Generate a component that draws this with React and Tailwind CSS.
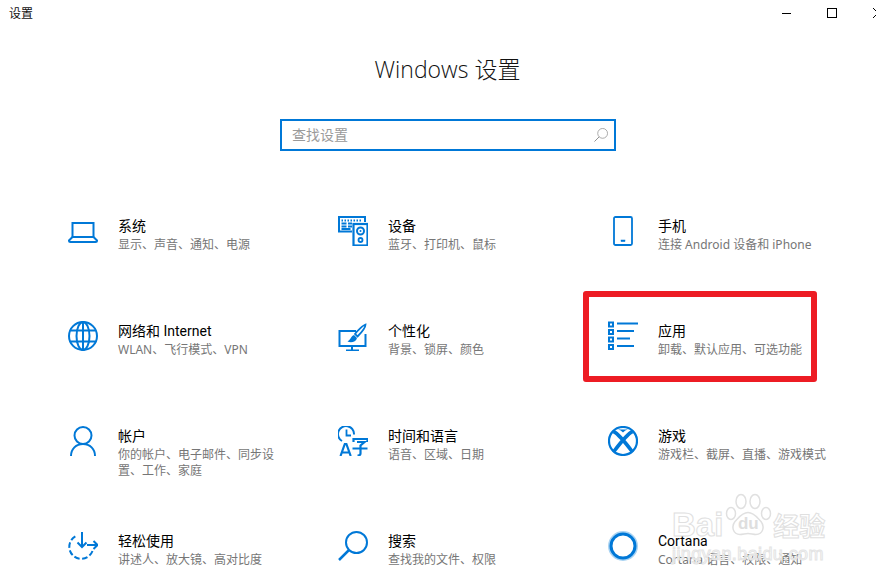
import React from 'react';

function Laptop() {
  return (
    <svg viewBox="0 0 30 30" className="h-[30px] w-[30px]" fill="none" stroke="#0078d7" strokeWidth="2">
      <rect x="4.500" y="7" width="21" height="14" />
      <path d="M4.500 21 1 24.500c0 .8.500 1.500 1.500 1.500h25c1 0 1.500-.7 1.500-1.500L25.500 21" />
    </svg>
  );
}

function Devices() {
  return (
    <svg viewBox="0 0 30 30" className="h-[30px] w-[30px]" fill="none" stroke="#0078d7" strokeWidth="2">
      <path d="M14 15.500H1V1h26v5" />
      <path d="M3.500 4.500h1.500M6.500 4.500h1.500M9.500 4.500h1.500M12.500 4.500h1.500M15.500 4.500h1.500M18.500 4.500h1.500M21.500 4.500h1.500M3.500 7.500h5M3.500 10.500h5M10 7.500h4M10 10.500h4M3.500 13h9" strokeWidth="1.800" />
      <rect x="15.500" y="8" width="14" height="21.500" strokeWidth="2.200" />
      <circle cx="22.500" cy="15" r="3.500" strokeWidth="2" />
      <circle cx="22.500" cy="15" r="1" fill="#0078d7" stroke="none" />
      <circle cx="22.500" cy="24" r="2" strokeWidth="1.800" />
    </svg>
  );
}

function Phone() {
  return (
    <svg viewBox="0 0 30 30" className="h-[30px] w-[30px]" fill="none" stroke="#0078d7" strokeWidth="1.800">
      <rect x="6" y="1" width="18" height="28" rx="1.500" />
      <rect x="13" y="24" width="4" height="1.600" fill="#0078d7" strokeWidth="0.500" />
    </svg>
  );
}

function Globe() {
  return (
    <svg viewBox="0 0 30 30" className="h-[30px] w-[30px]" fill="none" stroke="#0078d7" strokeWidth="2">
      <circle cx="15" cy="15" r="14" />
      <ellipse cx="15" cy="15" rx="6.500" ry="14" />
      <path d="M15 1v28M2.500 9.500h25M2.500 20.500h25" />
    </svg>
  );
}

function Brush() {
  return (
    <svg viewBox="0 0 30 30" className="h-[30px] w-[30px]" fill="none" stroke="#0078d7" strokeWidth="2">
      <path d="M18 10H1.500v15h26V13" />
      <path d="M14 25v4M8 29.500h13" />
      <path d="M27.500 3.500c-2 .5-8 6-10.500 9.500l2.500 2.500c3-3 8-8.500 8-12z" fill="#fff" strokeWidth="1.800" />
      <path d="M16 14c-3 .8-2.500 4-6.500 6.500 3 1.200 8.500 1 9.500-3.500z" fill="#0078d7" stroke="none" />
    </svg>
  );
}

function AppsList() {
  return (
    <svg viewBox="0 0 30 30" className="h-[30px] w-[30px]" fill="none">
      <g fill="#0078d7">
        <rect x="0" y="0.500" width="6" height="6" />
        <rect x="0" y="8" width="6" height="6" />
        <rect x="0" y="15.500" width="6" height="6" />
        <rect x="0" y="23" width="6" height="6" />
      </g>
      <g fill="#fff">
        <rect x="2" y="2.500" width="2" height="2" />
        <rect x="2" y="10" width="2" height="2" />
        <rect x="2" y="17.500" width="2" height="2" />
        <rect x="2" y="25" width="2" height="2" />
      </g>
      <path d="M9 2.500h21M9 10h17M9 17.500h13M9 25h17" stroke="#0078d7" strokeWidth="1.800" />
    </svg>
  );
}

function Person() {
  return (
    <svg viewBox="0 0 30 30" className="h-[30px] w-[30px]" fill="none" stroke="#0078d7" strokeWidth="2">
      <circle cx="15" cy="9.500" r="8.500" />
      <path d="M3 30C3 23 8 18 15 18S27 23 27 30" />
    </svg>
  );
}

function TimeLang() {
  return (
    <svg viewBox="0 0 30 30" className="h-[30px] w-[30px]" fill="none" stroke="#0078d7">
      <path d="M4 15A8 8 0 1 1 16 8.500" strokeWidth="2" />
      <path d="M8.500 3.500v6h4.500" strokeWidth="1.800" />
      <path d="M2.500 30 6.800 18h1.600l4.300 12M4 26.500h7" strokeWidth="2.200" />
      <path d="M15.500 16v-3h14v3M19 16h7.500l-4 3.500v8c0 1.500-1 2-3 2M14.500 22.500h15" strokeWidth="2.200" />
    </svg>
  );
}

function Xbox() {
  return (
    <svg viewBox="0 0 30 30" className="h-[30px] w-[30px]" fill="none" stroke="#0078d7">
      <circle cx="15" cy="15" r="14" strokeWidth="2.200" />
      <path d="M5.500 5.500C11 8 20 20 24.500 26M24.500 5.500C19 8 10 20 5.500 26" strokeWidth="3.600" />
      <path d="M10 3.500c2 .3 3.500 1.500 5 3 1.500-1.500 3-2.700 5-3z" fill="#0078d7" stroke="none" />
    </svg>
  );
}

function Ease() {
  return (
    <svg viewBox="0 0 30 30" className="h-[30px] w-[30px]" fill="none" stroke="#0078d7" strokeWidth="2">
      <path d="M24.500 20A12 12 0 1 1 8 5" strokeDasharray="5.500 2.500" />
      <path d="M14 1v15M9.500 11.500 14 16l4.500-4.500M19 14h10.500M25.500 10l4 4-4 4" />
    </svg>
  );
}

function Search({ className = 'h-[30px] w-[30px]', stroke = '#0078d7', width = 2 }) {
  return (
    <svg viewBox="0 0 30 30" className={className} fill="none" stroke={stroke} strokeWidth={width}>
      <circle cx="18.500" cy="11.500" r="10.500" />
      <path d="M11 19 1 29" strokeWidth={width + 0.5} />
    </svg>
  );
}

function CortanaRing() {
  return (
    <svg viewBox="0 0 30 30" className="h-[30px] w-[30px]" fill="none">
      <circle cx="15" cy="15" r="13.500" stroke="#a9d3f2" strokeWidth="3" />
      <circle cx="15" cy="15" r="12" stroke="#0078d7" strokeWidth="3" />
    </svg>
  );
}

const items = [
  { icon: <Laptop />, name: '系统', desc: '显示、声音、通知、电源' },
  { icon: <Devices />, name: '设备', desc: '蓝牙、打印机、鼠标' },
  { icon: <Phone />, name: '手机', desc: '连接 Android 设备和 iPhone' },
  { icon: <Globe />, name: '网络和 Internet', desc: 'WLAN、飞行模式、VPN' },
  { icon: <Brush />, name: '个性化', desc: '背景、锁屏、颜色' },
  { icon: <AppsList />, name: '应用', desc: '卸载、默认应用、可选功能' },
  { icon: <Person />, name: '帐户', desc: '你的帐户、电子邮件、同步设置、工作、家庭' },
  { icon: <TimeLang />, name: '时间和语言', desc: '语音、区域、日期' },
  { icon: <Xbox />, name: '游戏', desc: '游戏栏、截屏、直播、游戏模式' },
  { icon: <Ease />, name: '轻松使用', desc: '讲述人、放大镜、高对比度' },
  { icon: <Search />, name: '搜索', desc: '查找我的文件、权限' },
  { icon: <CortanaRing />, name: 'Cortana', desc: 'Cortana 语言、权限、通知' },
];

function Tile({ icon, name, desc }) {
  return (
    <div className="flex items-start gap-5">
      <div className="h-[30px] w-[30px] shrink-0">{icon}</div>
      <div className="w-[172px]">
        <div className="font-['Roboto','Noto_Sans_CJK_SC',sans-serif] text-[14px] leading-[20px] text-black">{name}</div>
        <div className="mt-[1px] text-[12px] leading-[16px] text-[#767676]">{desc}</div>
      </div>
    </div>
  );
}

function Watermark() {
  const outline = '[-webkit-text-stroke:1px_#e0e0e0] text-white/70 font-bold';
  return (
    <div className="pointer-events-none absolute top-[488px] left-[672px] h-[76px] w-[160px] font-['Liberation_Sans',sans-serif]">
      <div className="flex h-[52px] items-end">
        <span className={`${outline} text-[33px] leading-[30px]`}>Bai</span>
        <div className="relative mb-[3px] h-[45px] w-[50px] shrink-0">
          <svg viewBox="0 0 50 44" className="h-[45px] w-[50px]" fill="#ffffff66" stroke="#e0e0e0" strokeWidth="1.500">
            <ellipse cx="8" cy="21" rx="4.500" ry="6" />
            <ellipse cx="18" cy="9" rx="5" ry="7" />
            <ellipse cx="32" cy="9" rx="5" ry="7" />
            <ellipse cx="43" cy="21" rx="4.500" ry="6" />
            <path d="M25 20c6 0 9 5 13 9 4 5 2 13-5 13-3 0-5-1-8-1s-5 1-8 1c-7 0-9-8-5-13 4-4 7-9 13-9z" />
          </svg>
          <span className="absolute inset-x-0 bottom-[4px] text-center text-[17px] leading-[18px] font-bold text-[#dedede]">du</span>
        </div>
        <span className={`${outline} font-['Noto_Sans_CJK_SC',sans-serif] text-[26px] leading-[30px]`}>经验</span>
      </div>
      <div className="mt-[6px] text-[18px] leading-[16px] tracking-[0.4px] whitespace-nowrap text-white/70 [-webkit-text-stroke:1px_#e4e4e4]">jingyan.baidu.com</div>
    </div>
  );
}

export default function App() {
  return (
    <div className="relative h-[584px] w-[876px] overflow-hidden bg-white font-['Noto_Sans','Noto_Sans_CJK_SC',sans-serif]">
      {/* Title bar */}
      <div className="flex h-[27px] items-center justify-between pl-[9px]">
        <span className="text-[12px] text-[#111]">设置</span>
        <div className="-mt-[1px] flex items-center gap-[36px]">
          <span className="h-[1px] w-[9px] bg-black" />
          <span className="h-[10px] w-[10px] border border-black" />
          <svg viewBox="0 0 10 10" className="-mr-[7px] h-[10px] w-[10px]" stroke="#000" fill="none">
            <path d="M0 0l10 10M10 0 0 10" />
          </svg>
        </div>
      </div>

      <h1 className="mt-[24px] pl-[19px] text-center font-['Open_Sans','Noto_Sans_CJK_SC',sans-serif] text-[23px] leading-[36px] font-light text-[#111]">Windows 设置</h1>

      {/* Search */}
      <div className="mt-[32px] ml-[280px] flex h-[32px] w-[336px] items-center justify-between border-2 border-[#0078d7] pr-[6px] pl-[10px]">
        <span className="-mt-[2px] text-[14px] text-[#9a9a9a]">查找设置</span>
        <Search className="h-[14px] w-[14px]" stroke="#8a8a8a" width={1.500} />
      </div>

      {/* Tiles */}
      <div className="mt-[65px] ml-[68px] grid auto-rows-[105px] grid-cols-[270px_270px_270px]">
        {items.map((it) => (
          <Tile key={it.name} {...it} />
        ))}
      </div>

      {/* Red highlight around 应用 */}
      <div className="absolute top-[291px] left-[583px] h-[91px] w-[234px] rounded-[3px] border-[6px] border-[#ed1c24]" />

      <Watermark />
    </div>
  );
}
